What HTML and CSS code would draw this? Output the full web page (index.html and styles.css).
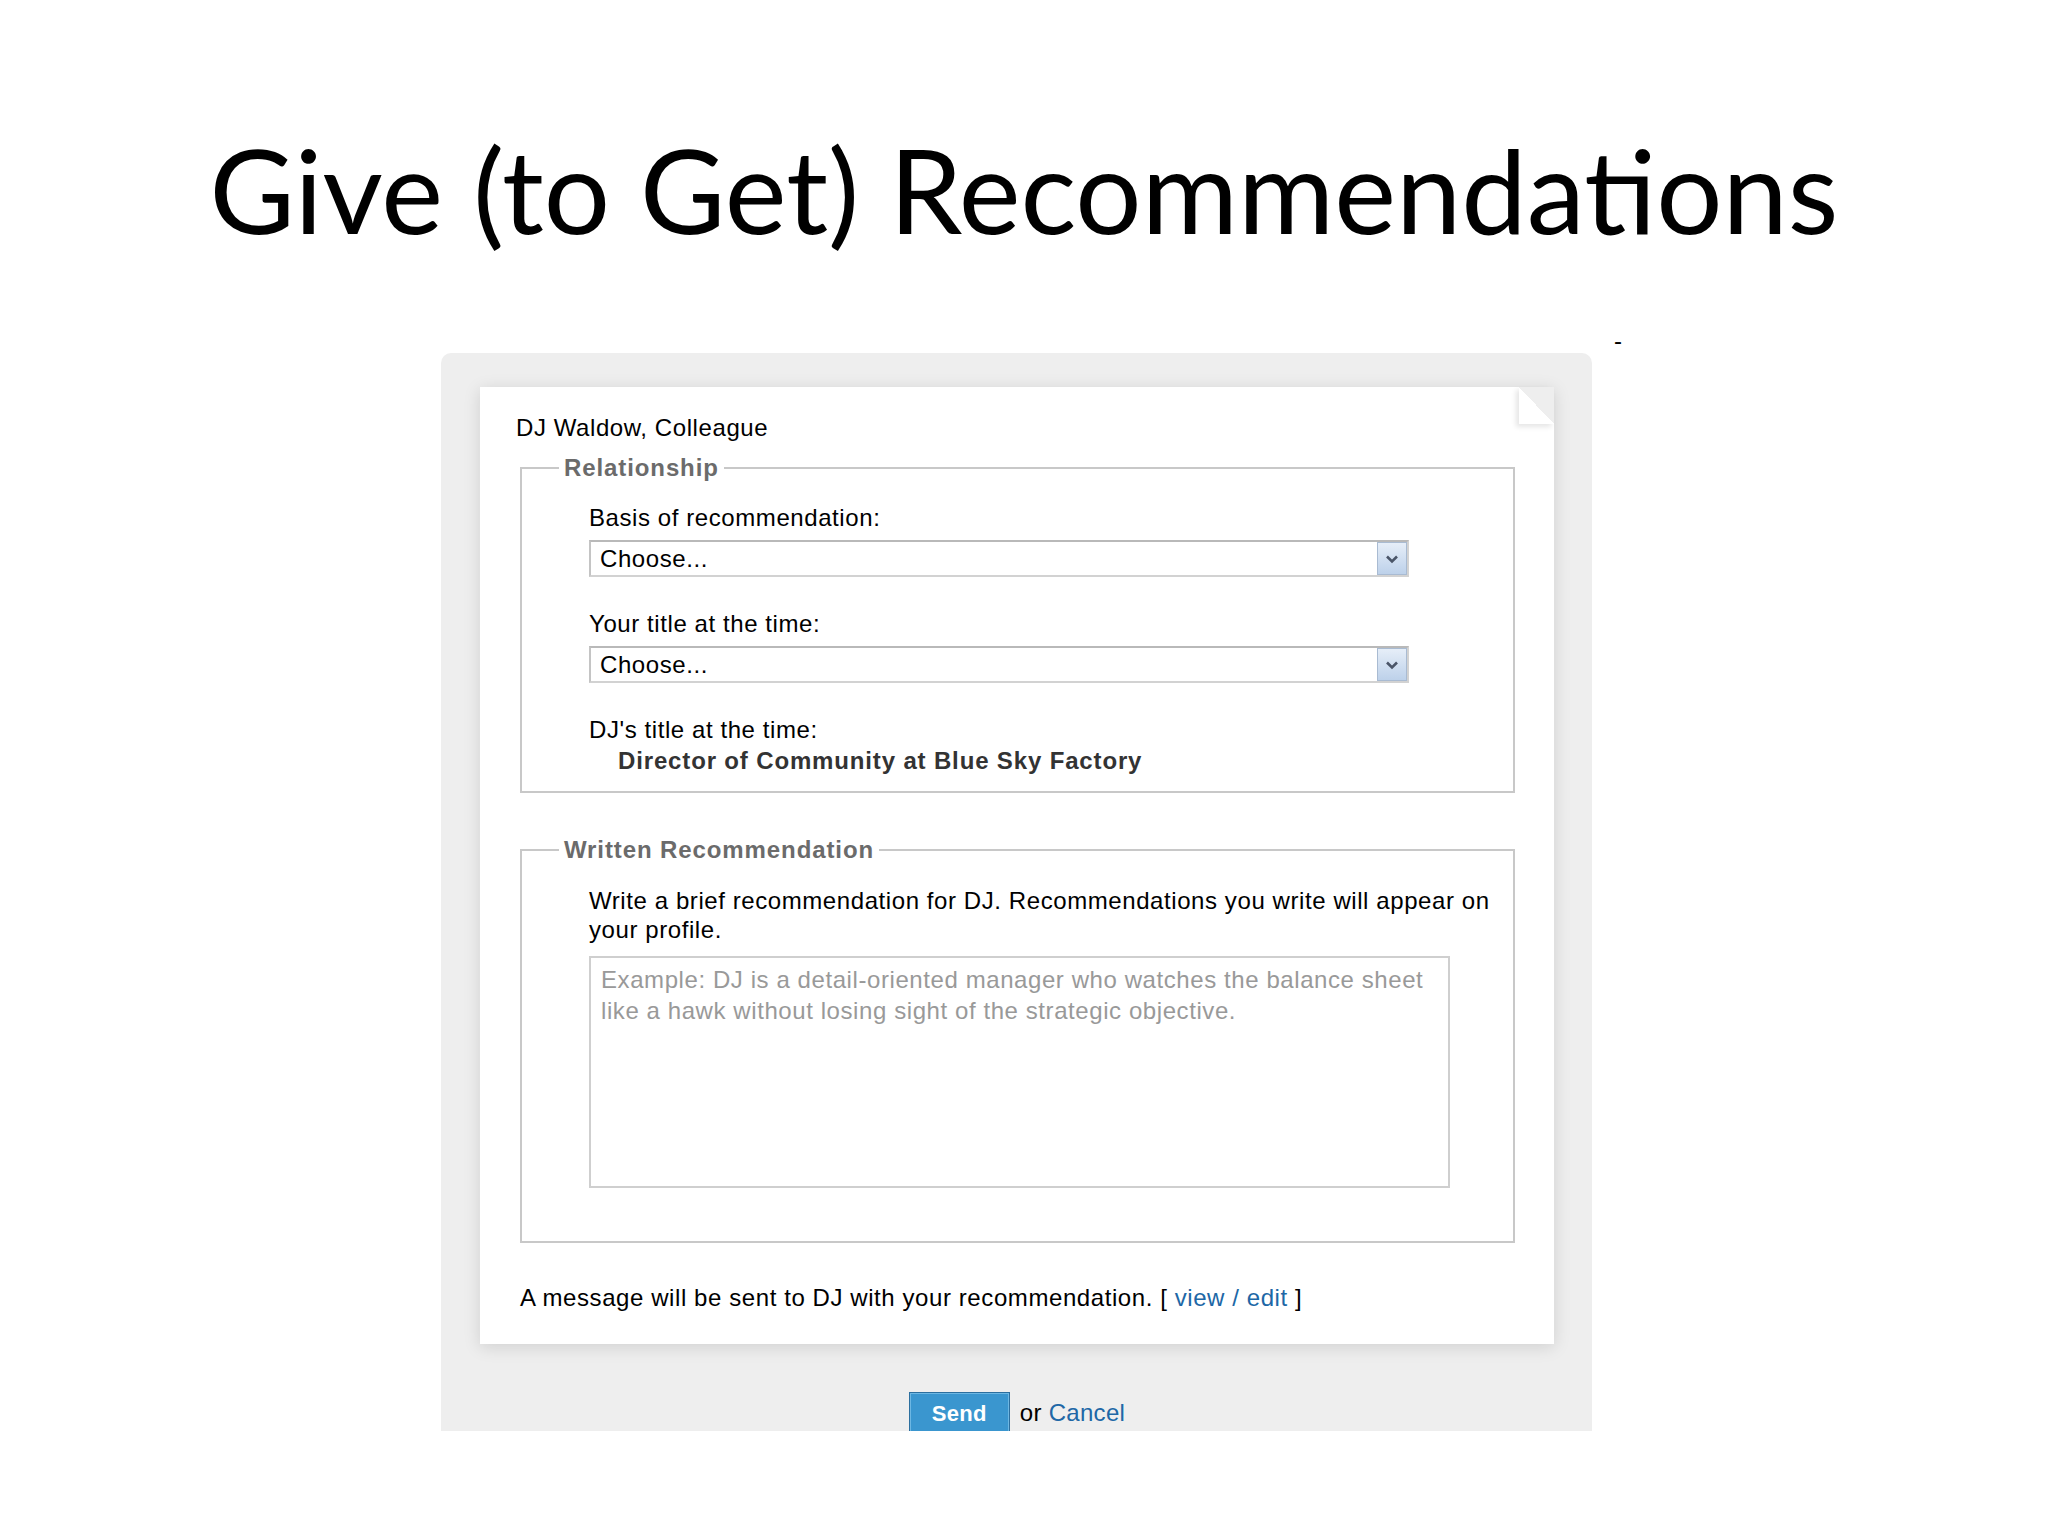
FILE: index.html
```html
<!DOCTYPE html>
<html lang="en">
<head>
<meta charset="utf-8">
<title>Give (to Get) Recommendations</title>
<link rel="stylesheet" href="styles.css">
</head>
<body>
<div class="slide">
  <h1 class="title">Give (to Get) Recommendations</h1>
  <span class="mark">-</span>
  <div class="panel">
    <div class="card">
      <div class="fold"></div>
      <div class="who">DJ Waldow, Colleague</div>
      <fieldset class="group rel">
        <legend>Relationship</legend>
        <div class="inner">
          <div class="label">Basis of recommendation:</div>
          <div class="select">
            <span class="choice">Choose...</span>
            <span class="arrow"><svg width="16" height="12" viewBox="0 0 16 12"><path d="M3 3.5 L8 8.5 L13 3.5" fill="none" stroke="#4a5568" stroke-width="2.6"/></svg></span>
          </div>
          <div class="label gap">Your title at the time:</div>
          <div class="select">
            <span class="choice">Choose...</span>
            <span class="arrow"><svg width="16" height="12" viewBox="0 0 16 12"><path d="M3 3.5 L8 8.5 L13 3.5" fill="none" stroke="#4a5568" stroke-width="2.6"/></svg></span>
          </div>
          <div class="label gap">DJ's title at the time:</div>
          <div class="their">Director of Community at Blue Sky Factory</div>
        </div>
      </fieldset>
      <fieldset class="group written">
        <legend>Written Recommendation</legend>
        <div class="inner">
          <p class="intro">Write a brief recommendation for DJ. Recommendations you write will appear on your profile.</p>
          <div class="textarea">Example: DJ is a detail-oriented manager who watches the balance sheet like a hawk without losing sight of the strategic objective.</div>
        </div>
      </fieldset>
      <p class="msg">A message will be sent to DJ with your recommendation. [ <a class="link" href="#">view / edit</a> ]</p>
    </div>
    <div class="actions"><span class="send">Send</span> or <a class="link" href="#">Cancel</a></div>
  </div>
</div>
</body>
</html>
```

FILE: styles.css
```css
* { box-sizing: border-box; }
html, body { margin: 0; padding: 0; background: #ffffff; }
body {
  width: 2048px;
  height: 1536px;
  overflow: hidden;
  font-family: "Liberation Sans", Arial, sans-serif;
  color: #000;
}
.slide { position: relative; width: 2048px; height: 1536px; }
.title {
  margin: 0;
  padding-top: 131px;
  height: 353px;
  font-family: Lato, "Open Sans", sans-serif;
  font-weight: 400;
  font-size: 117px;
  line-height: 117px;
  text-align: center;
  color: #000;
}
.mark {
  position: absolute;
  left: 1614px;
  top: 329px;
  font-size: 24px;
  line-height: 24px;
}
.panel {
  margin-left: 441px;
  width: 1151px;
  height: 1078px;
  overflow: hidden;
  background: #eeeeee;
  border-radius: 10px 10px 0 0;
  padding: 34px 38px 0 39px;
}
.card {
  position: relative;
  background: #ffffff;
  padding: 27px 39px 32px 40px;
  box-shadow: 0 3px 16px rgba(0, 0, 0, 0.13);
  font-size: 24px;
  line-height: 28px;
  letter-spacing: 0.58px;
}
.fold {
  position: absolute;
  top: 0;
  right: 0;
  width: 35px;
  height: 37px;
  background: linear-gradient(to bottom left, #eeeeee 50%, #ffffff 50%);
  box-shadow: -3px 3px 5px rgba(0, 0, 0, 0.10);
}
.who { margin-left: -4px; }
.group {
  margin: 12px 0 0;
  padding: 0;
  border: 2px solid #c8c8c8;
  min-width: 0;
}
.group legend {
  margin-left: 37px;
  padding: 0 5px;
  font-weight: bold;
  color: #6b6b6b;
  line-height: 28px;
  letter-spacing: 0.9px;
}
.inner { padding: 22px 6px 16px 67px; }
.select {
  position: relative;
  margin-top: 8px;
  width: 820px;
  height: 37px;
  display: flex;
  align-items: center;
  padding-left: 9px;
  border: 2px solid;
  border-color: #b9b9b9 #d2d2d2 #d2d2d2 #c4c4c4;
  background: #fff;
}
.arrow {
  position: absolute;
  top: 0;
  right: 0;
  width: 30px;
  height: 100%;
  display: flex;
  align-items: center;
  justify-content: center;
  border: 1px solid #a9bbd2;
  background: linear-gradient(#e6eef8, #bdd1ea);
}
.label.gap { margin-top: 33px; }
.their {
  margin: 3px 0 0 29px;
  font-weight: bold;
  color: #333;
  letter-spacing: 0.85px;
}
.written { margin-top: 43px; }
.written .inner { padding-bottom: 53px; }
.intro { margin: 0; line-height: 29px; }
.textarea {
  margin-top: 12px;
  width: 861px;
  height: 232px;
  border: 2px solid #cfcfcf;
  padding: 6px 10px;
  color: #999;
  line-height: 31px;
}
.msg { margin: 41px 0 0; }
.link { color: #2067a6; text-decoration: none; }
.actions {
  margin-top: 48px;
  text-align: center;
  font-size: 24px;
  line-height: 28px;
  letter-spacing: 0.3px;
}
.send {
  display: inline-block;
  padding: 8px 22px;
  margin-right: 3px;
  border: 1px solid #2c6f9f;
  background: #3a96cf;
  box-shadow: inset 0 0 0 1px #6db7e3;
  color: #fff;
  font-weight: bold;
  font-size: 22px;
  line-height: 26px;
}
```
